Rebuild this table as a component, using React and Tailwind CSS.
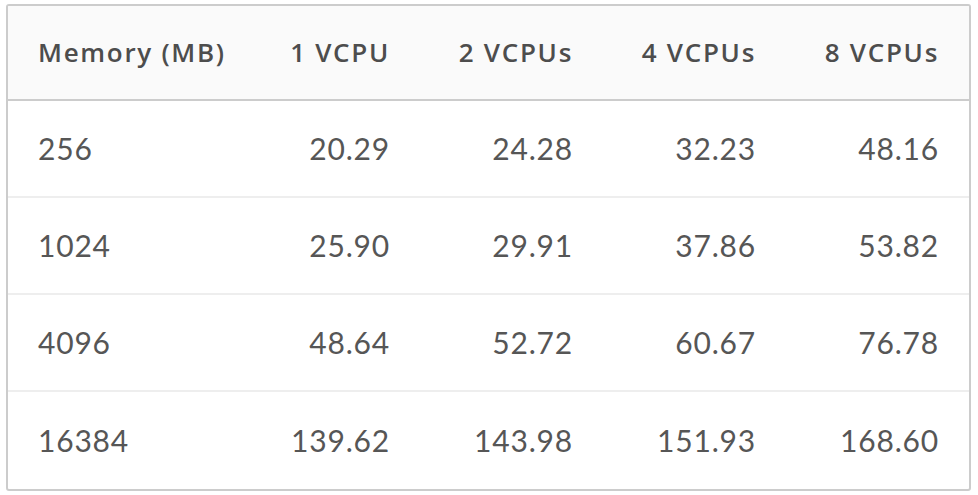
const columns = ["Memory (MB)", "1 VCPU", "2 VCPUs", "4 VCPUs", "8 VCPUs"];

const rows = [
  ["256", "20.29", "24.28", "32.23", "48.16"],
  ["1024", "25.90", "29.91", "37.86", "53.82"],
  ["4096", "48.64", "52.72", "60.67", "76.78"],
  ["16384", "139.62", "143.98", "151.93", "168.60"],
];

export default function App() {
  return (
    <div className="min-h-[495px] bg-white pl-[6px] pt-[4px]" style={{ fontFamily: "Lato, 'Open Sans', sans-serif" }}>
      <div className="w-[965px] overflow-hidden rounded-[3px] border-2 border-[#cccccc]">
        <div
          className="grid h-[95px] grid-cols-[229px_183px_183px_183px_183px] items-center border-b-2 border-[#cccccc] bg-[#fafafa] text-[26px] font-semibold tracking-[1.7px] text-[#4d4d4d]"
          style={{ fontFamily: "'Open Sans', Lato, sans-serif" }}
        >
          {columns.map((label, index) => (
            <div key={label} className={index === 0 ? "pl-[30px] text-left" : "pr-[30px] text-right"}>
              {label}
            </div>
          ))}
        </div>
        {rows.map((row, rowIndex) => (
          <div
            key={row[0]}
            className={`grid h-[97px] grid-cols-[229px_183px_183px_183px_183px] items-center text-[30px] tracking-[0.8px] text-[#565656] ${
              rowIndex < rows.length - 1 ? "border-b-2 border-[#eeeeee]" : ""
            }`}
          >
            {row.map((value, index) => (
              <div key={index} className={index === 0 ? "pl-[30px] text-left" : "pr-[30px] text-right"}>
                {value}
              </div>
            ))}
          </div>
        ))}
      </div>
    </div>
  );
}
